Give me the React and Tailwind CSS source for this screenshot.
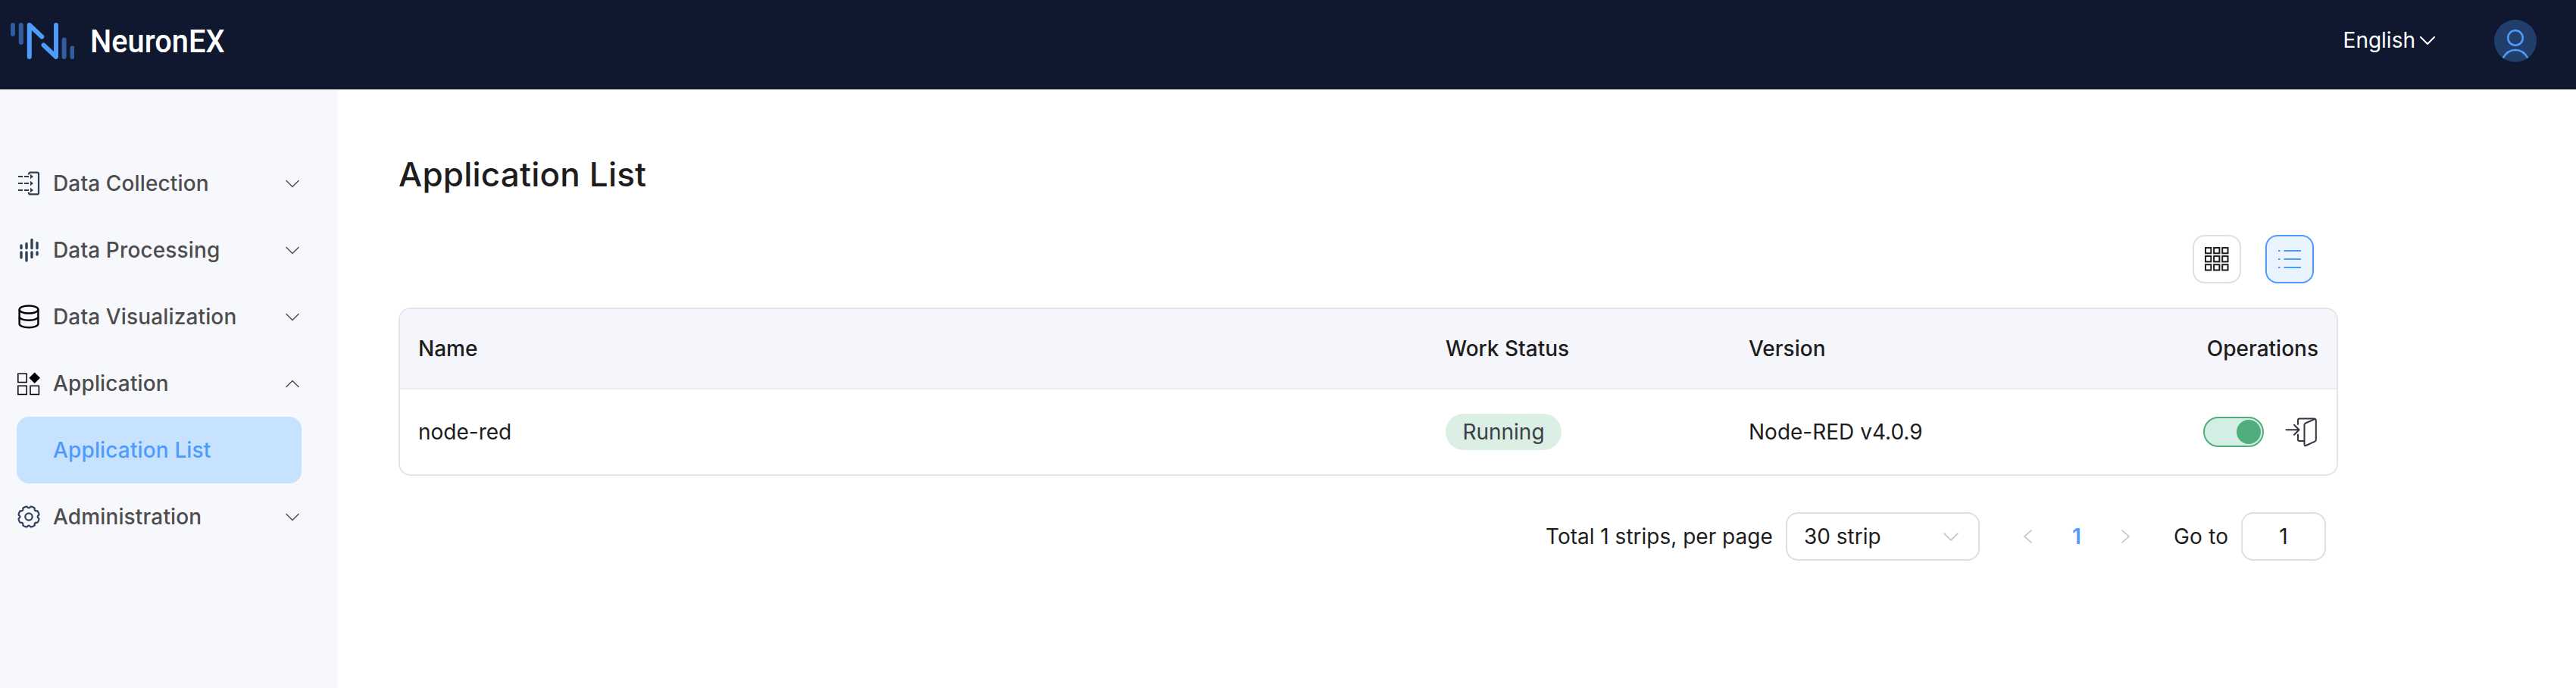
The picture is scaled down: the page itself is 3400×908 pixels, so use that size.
import React from "react";

function Chevron({ className, d = "M1 1.5 L9 9.5 L17 1.5", stroke = "#4d4d4d", w = 18, h = 11, sw = 1.5 }) {
  return (
    <svg className={className} width={w} height={h} viewBox={`0 0 ${w} ${h}`} fill="none" stroke={stroke} strokeWidth={sw} strokeLinecap="round" strokeLinejoin="round">
      <path d={d} />
    </svg>
  );
}

const CollectionIcon = () => (
  <svg width="30" height="32" viewBox="0 0 30 32" fill="none" stroke="#2f3f52" strokeWidth="2.2">
    <path d="M15 4.6V3.6a2 2 0 0 1 2-2h9a2 2 0 0 1 2 2v24.8a2 2 0 0 1-2 2h-9a2 2 0 0 1-2-2v-1" />
    <path d="M1 7h6M9 7h6M1 16h6M9 16h6M1 25h6M9 25h6" />
    <path d="M17 3.8 21 7l-4 3.2zM17 12.8 21 16l-4 3.2zM17 21.8 21 25l-4 3.2z" fill="#2f3f52" stroke="none" />
  </svg>
);

const ProcessingIcon = () => (
  <svg width="30" height="32" viewBox="0 0 30 32" fill="none" stroke="#2f4258" strokeWidth="3.4" strokeLinecap="round">
    <path d="M5 10v3.5M5 19v7M12 7.5v6M12 19v11M19 2.5v11M19 19v6.5M26 6.5v7M26 19v3" />
  </svg>
);

const DatabaseIcon = () => (
  <svg width="30" height="32" viewBox="0 0 30 32" fill="none" stroke="#000" strokeWidth="2.4">
    <ellipse cx="15" cy="6.5" rx="12.4" ry="5" />
    <path d="M2.6 6.5v19c0 2.6 5.5 4.7 12.4 4.7s12.4-2.1 12.4-4.7v-19" />
    <path d="M2.6 16c0 2.6 5.5 4.7 12.4 4.7s12.4-2.1 12.4-4.7" />
  </svg>
);

const ApplicationIcon = () => (
  <svg width="30" height="32" viewBox="0 0 30 32" fill="none" stroke="#000" strokeWidth="1.5">
    <path d="M.8 3.2h11.4v11.4H.8zM.8 19.2h11.4v11.4H.8zM17 19.2h11.4v11.4H17z" />
    <path d="M22.700 1.500 30 8.800l-7.300 7.300-7.300-7.300z" fill="#000" stroke="none" />
  </svg>
);

// Outline of an eight-toothed gear centred on (15, 16)
const gear = Array.from({ length: 161 }, (_, i) => {
  const t = (i / 160) * Math.PI * 2;
  const r = 12.7 + 1.1 * Math.tanh(3 * (Math.cos(8 * t + Math.PI) + 0.5));
  return `${(15 + r * Math.cos(t)).toFixed(2)},${(16 + r * Math.sin(t)).toFixed(2)}`;
}).join(" ");

const GearIcon = () => (
  <svg width="30" height="32" viewBox="0 0 30 32" fill="none" stroke="#2f4258" strokeWidth="2.2" className="overflow-visible">
    <polygon points={gear} strokeLinejoin="round" />
    <circle cx="15" cy="16" r="4.7" />
  </svg>
);

function MenuItem({ icon, label, open }) {
  return (
    <div className="flex h-[88px] items-center pl-[23px] pr-[51px]">
      <div className="w-[30px]">{icon}</div>
      <span className="ml-[17px] flex-1 font-medium tracking-[0.14px] text-[#4d4d4d]">{label}</span>
      <Chevron d={open ? "M1 9.5 L9 1.5 L17 9.5" : undefined} />
    </div>
  );
}

export default function App() {
  return (
    <div className="flex h-[908px] w-[3400px] flex-col overflow-hidden bg-white font-['Inter','Liberation_Sans',sans-serif] text-[28px] leading-[40px] text-[#1d1d1d]">
      <header className="flex h-[118px] shrink-0 items-center bg-[#10182f] pb-[10px] pl-[14px] pr-[52px]">
        <svg width="84" height="48" viewBox="0 0 84 48" fill="none" stroke="#4f9bfc" strokeWidth="6" strokeLinecap="round" strokeLinejoin="round">
          <path d="M2.9 3v12M13.8 3v23M70.6 22.5v22.5M81.5 33.5v11.5" stroke="#315d9e" />
          <path d="M24.8 45V3l16.5 15.5M43.5 29.5 60 45V3" />
        </svg>
        <span className="ml-[21px] mt-[-1px] origin-left scale-x-[0.925] font-['Roboto',sans-serif] text-[43px] font-medium text-white">NeuronEX</span>
        <div className="ml-auto flex items-center">
          <span className="mt-[-2px] text-white">English</span>
          <Chevron className="ml-[6px]" stroke="#fff" w={20} h={12} sw={2} d="M1 1 L10 10 L19 1" />
          <svg className="ml-[78px]" width="56" height="56" viewBox="0 0 56 56" fill="none">
            <circle cx="28" cy="28" r="28" fill="#223f6b" />
            <circle cx="28" cy="24" r="9.8" stroke="#4f9bfc" strokeWidth="2.6" />
            <path d="M11.8 50.5c3.5-6.5 9.5-10.5 16.2-10.5s12.7 4 16.2 10.5" stroke="#4f9bfc" strokeWidth="2.6" />
          </svg>
        </div>
      </header>
      <div className="flex flex-1">
        <nav className="w-[446px] shrink-0 bg-[#f7f8fc] pt-[80px]">
          <MenuItem icon={<CollectionIcon />} label="Data Collection" />
          <MenuItem icon={<ProcessingIcon />} label="Data Processing" />
          <MenuItem icon={<DatabaseIcon />} label="Data Visualization" />
          <MenuItem icon={<ApplicationIcon />} label="Application" open />
          <div className="ml-[22px] flex h-[88px] w-[376px] items-center rounded-[16px] bg-[#c6e2ff] pl-[48px] font-medium tracking-[0.14px] text-[#4f9bfc]">Application List</div>
          <MenuItem icon={<GearIcon />} label="Administration" />
        </nav>
        <main className="ml-[80px] w-[2560px] pt-[82px]">
          <h1 className="h-[60px] text-[44px] font-medium leading-[60px] tracking-[0.2px]">Application List</h1>
          <div className="mt-[50px] flex justify-end gap-[32px] pr-[32px]">
            <button className="flex h-16 w-16 items-center justify-center rounded-[16px] border-2 border-[#dcdfe6]">
              <svg width="32" height="32" viewBox="0 0 32 32" fill="none" stroke="#1d1d1d" strokeWidth="2">
                {[1, 12.1, 23.2].map((y) => [1, 12.1, 23.2].map((x) => <rect key={x + "-" + y} x={x} y={y} width="7.3" height="7.3" />))}
              </svg>
            </button>
            <button className="flex h-16 w-16 items-center justify-center rounded-[16px] border-2 border-[#4f9bfc] bg-[#eaf4fe]">
              <svg width="30" height="26" viewBox="0 0 30 26" stroke="#4f9bfc" strokeWidth="2.2">
                <path d="M0 2h2.5M7.5 2H30M0 13h2.5M7.5 13H30M0 24h2.5M7.5 24H30" />
              </svg>
            </button>
          </div>
          <section className="mt-[32px] h-[222px] overflow-hidden rounded-[16px] border-2 border-[#e2e5ea]">
            <div className="flex h-[106px] items-center border-b-2 border-[#ebeef5] bg-[#f5f6fb] pl-[24px] pr-[24px] font-medium">
              <span className="w-[1356px]">Name</span>
              <span className="w-[400px]">Work Status</span>
              <span className="flex-1">Version</span>
              <span>Operations</span>
            </div>
            <div className="flex h-[112px] items-center pl-[24px] pr-[26px]">
              <span className="w-[1356px]">node-red</span>
              <span className="w-[400px]">
                <span className="flex h-12 w-[153px] items-center justify-center rounded-full bg-[#dbefe4] text-[#3b3f4a]">Running</span>
              </span>
              <span className="flex-1">Node-RED v4.0.9</span>
              <span className="flex h-10 w-20 items-center justify-end rounded-full border-2 border-[#4fae7b] bg-[#d3eee4] pr-[2px]">
                <span className="h-8 w-8 rounded-full bg-[#4fae7b]" />
              </span>
              <svg className="ml-[28px]" width="42" height="40" viewBox="0 0 42 40" fill="none" stroke="#33343f" strokeWidth="2" strokeLinejoin="round" strokeLinecap="round">
                <path d="M1.5 17.2H18M12 10.800l6.500 6.400-6.500 6.500" />
                <path d="M17 10V4.500a2 2 0 0 1 2-2h20M17 23.500v6.500a2 2 0 0 0 2 2h6" />
                <path d="M27 8.500 39 3.200q1.800-.6 1.800 1.300v26q0 1.500-1.400 2.100L27.500 38q-2 .7-2-1.200V10.500q0-1.400 1.500-2z" />
              </svg>
            </div>
          </section>
          <div className="mt-[48px] flex h-16 items-center pl-[1514px]">
            <span className="w-[317px]">Total 1 strips, per page</span>
            <div className="flex h-16 w-[256px] items-center justify-between rounded-[16px] border-2 border-[#dcdfe6] pl-[22px] pr-[26px]">
              <span>30 strip</span>
              <Chevron stroke="#b9bdc8" w={20} h={11} d="M1 1 L10 10 L19 1" />
            </div>
            <Chevron className="ml-[58px]" stroke="#b9bdc8" w={11} h={18} d="M10 1 L1 9 L10 17" />
            <span className="w-[118px] text-center font-semibold text-[#4f9bfc]">1</span>
            <Chevron stroke="#b9bdc8" w={11} h={18} d="M1 1 L10 9 L1 17" />
            <span className="ml-[58px] w-[89px] tracking-[0.2px]">Go to</span>
            <div className="flex h-16 w-[112px] items-center justify-center rounded-[16px] border-2 border-[#dcdfe6]">1</div>
          </div>
        </main>
      </div>
    </div>
  );
}
